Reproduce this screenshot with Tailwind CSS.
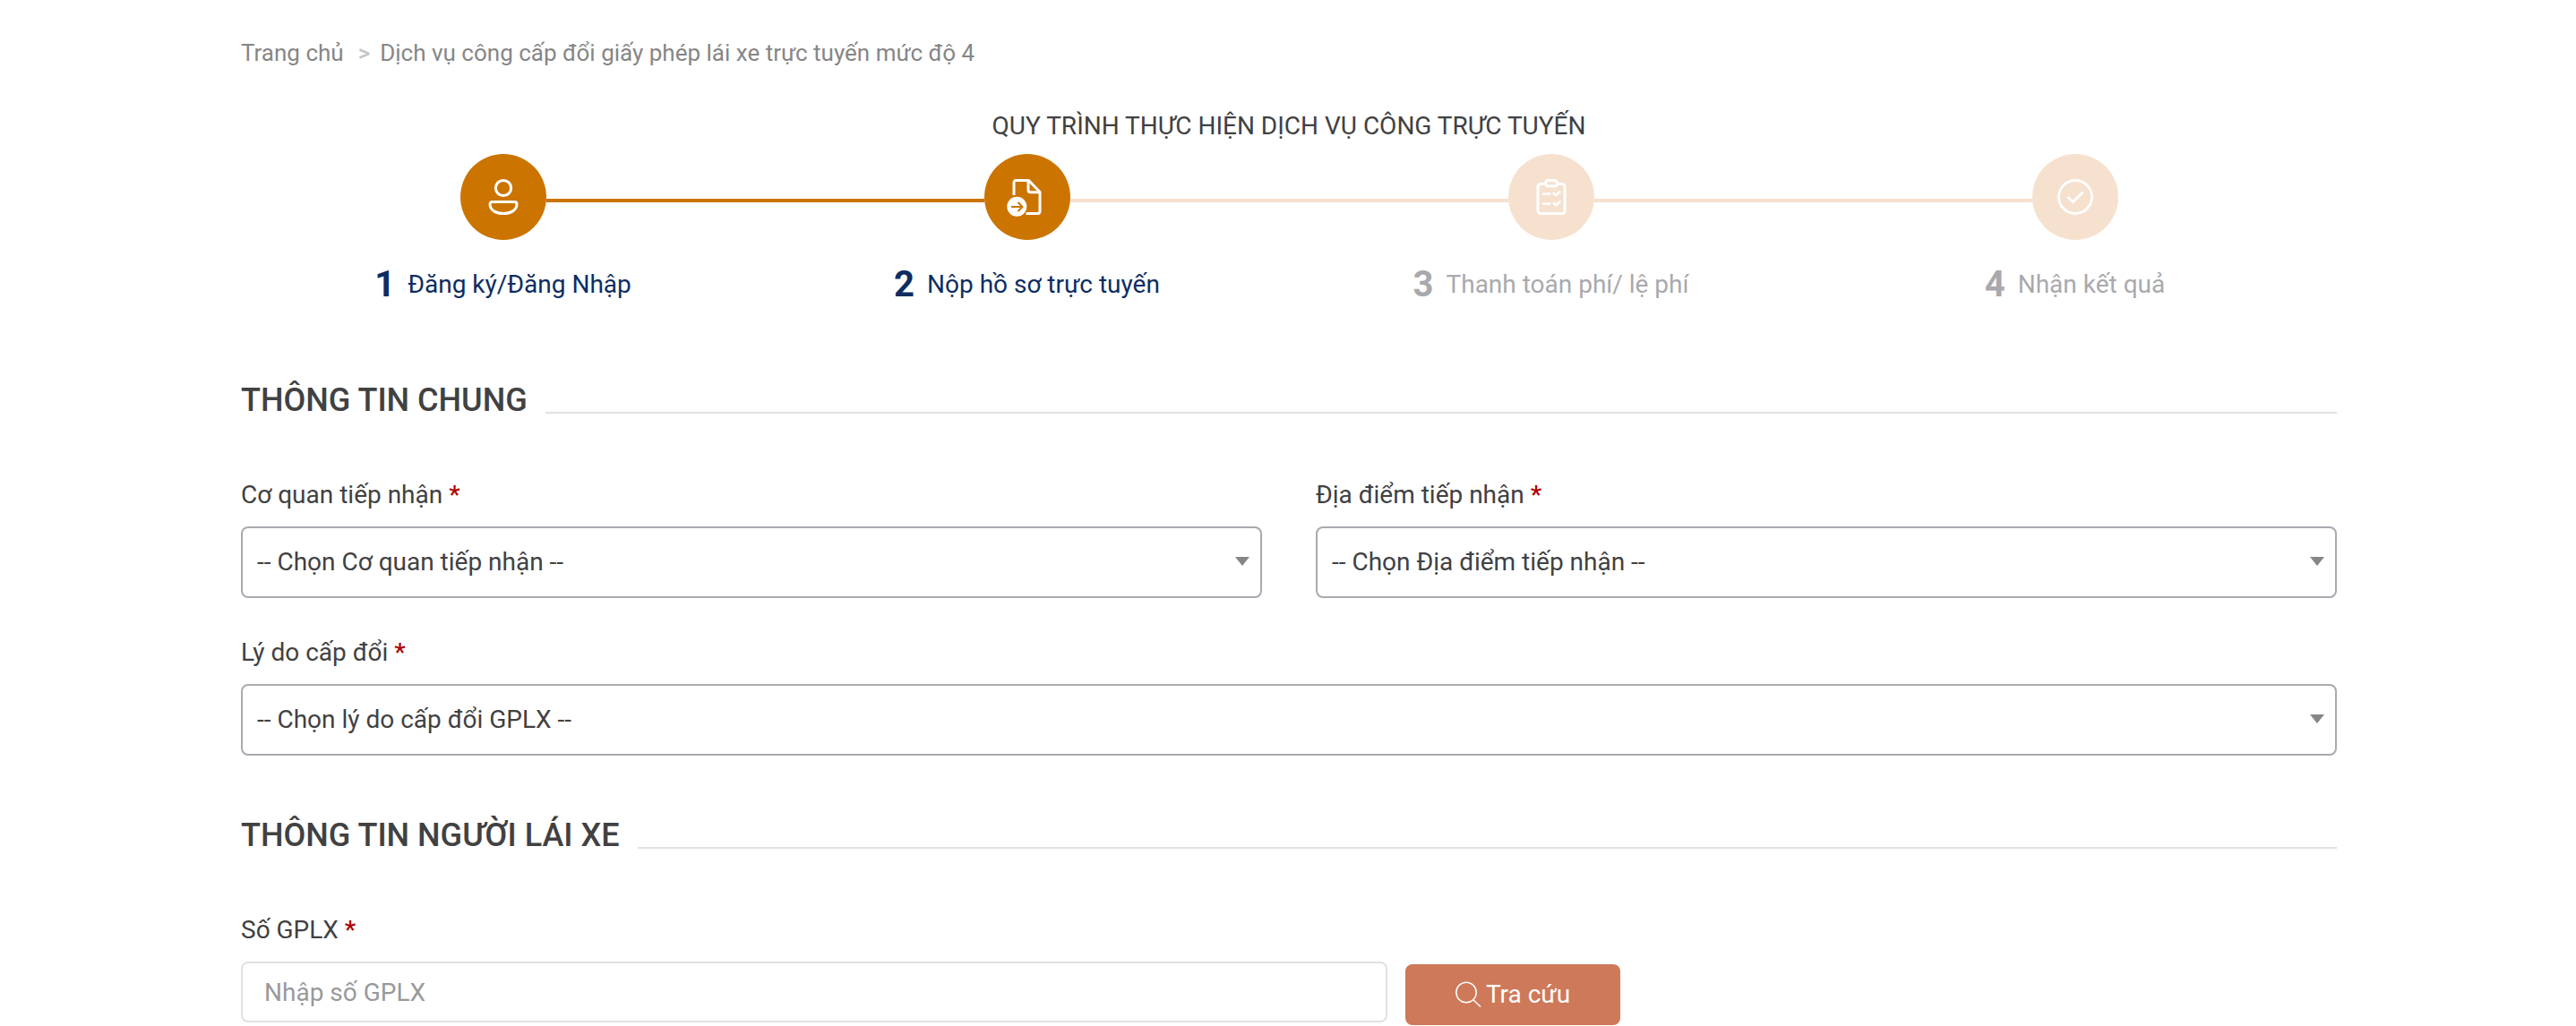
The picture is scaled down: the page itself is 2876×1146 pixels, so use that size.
<!DOCTYPE html>
<html lang="vi">
<head>
  <meta charset="UTF-8" />
  <title>Dịch vụ công cấp đổi giấy phép lái xe</title>
  <script src="https://cdn.jsdelivr.net/npm/@tailwindcss/browser@4"></script>
</head>
<body class="bg-white h-[1146px] overflow-hidden font-['Roboto',sans-serif] text-[28px] leading-10 text-[#414142]">
  <main class="w-[2340px] ml-[269px] pt-[39px]">

    <nav class="flex text-[26px] text-[#868686]">
      <a href="#">Trang chủ</a>
      <span class="ml-4 mr-[11px] font-medium text-[#c4c4c6]">&gt;</span>
      <a href="#">Dịch vụ công cấp đổi giấy phép lái xe trực tuyến mức độ 4</a>
    </nav>

    <!-- Các bước thực hiện -->
    <h2 class="mt-[42px] text-center">QUY TRÌNH THỰC HIỆN DỊCH VỤ CÔNG TRỰC TUYẾN</h2>
    <ol class="mt-[11px] grid grid-cols-4">
      <li class="text-[#0d2d62]">
        <div class="flex items-center">
          <span class="flex-1"></span>
          <span class="size-24 rounded-full bg-[#cb7400] flex items-center justify-center">
            <svg class="size-12" viewBox="-4 -4 48 48" fill="none" stroke="#fff" stroke-width="3">
              <circle cx="20" cy="10" r="8.6" />
              <path d="M7.5 25.5h25a2.5 2.5 0 0 1 2.5 2.5c0 7-7 10.5-15 10.5S5 35 5 28a2.5 2.5 0 0 1 2.5-2.5z" />
            </svg>
          </span>
          <span class="flex-1 h-1 mt-2 bg-[#cb7400]"></span>
        </div>
        <p class="mt-[25px] flex justify-center items-center gap-3.5"><b class="pt-px text-[40px] leading-12">1</b> <span class="pt-px">Đăng ký/Đăng Nhập</span></p>
      </li>
      <li class="text-[#0d2d62]">
        <div class="flex items-center">
          <span class="flex-1 h-1 mt-2 bg-[#cb7400]"></span>
          <span class="size-24 rounded-full bg-[#cb7400] flex items-center justify-center">
            <svg class="size-12" viewBox="-4 -4 48 48" fill="none" stroke="#fff" stroke-width="3" stroke-linejoin="round">
              <path d="M5 18V4a2.5 2.5 0 0 1 2.5-2.5h14L34 14.5V36a2.5 2.5 0 0 1-2.5 2.5H18.500" />
              <path d="M21 2v10.300a2.500 2.500 0 0 0 2.500 2.500h10.500" />
              <circle cx="8.300" cy="30.800" r="11" fill="#fff" stroke="none" />
              <path d="M2 31h12.500M9.500 26l5 5-5 5" stroke="#cb7400" stroke-width="2" />
            </svg>
          </span>
          <span class="flex-1 h-1 mt-2 bg-[#f6e1cf]"></span>
        </div>
        <p class="mt-[25px] flex justify-center items-center gap-3.5"><b class="pt-px text-[40px] leading-12">2</b> <span class="pt-px">Nộp hồ sơ trực tuyến</span></p>
      </li>
      <li class="text-[#a9a9ad]">
        <div class="flex items-center">
          <span class="flex-1 h-1 mt-2 bg-[#f6e1cf]"></span>
          <span class="size-24 rounded-full bg-[#f6e1cf] flex items-center justify-center">
            <svg class="size-12" viewBox="-4 -4 48 48" fill="none" stroke="#fff" stroke-width="3" stroke-linecap="round" stroke-linejoin="round">
              <path d="M13.5 5.5H8A3 3 0 0 0 5 8.5V35.5a3 3 0 0 0 3 3H32a3 3 0 0 0 3-3V8.5a3 3 0 0 0-3-3H26.5" />
              <rect x="13.5" y="1.5" width="13" height="6.5" rx="3" />
              <path stroke-width="2.800" d="M11.500 16.500h6.500M22.800 16l2.500 2 4-3.500M11.500 27.500h6.500M22.800 27l2.500 2 4-3.500" />
            </svg>
          </span>
          <span class="flex-1 h-1 mt-2 bg-[#f6e1cf]"></span>
        </div>
        <p class="mt-[25px] flex justify-center items-center gap-3.5"><b class="pt-px text-[40px] leading-12">3</b> <span class="pt-px">Thanh toán phí/ lệ phí</span></p>
      </li>
      <li class="text-[#a9a9ad]">
        <div class="flex items-center">
          <span class="flex-1 h-1 mt-2 bg-[#f6e1cf]"></span>
          <span class="size-24 rounded-full bg-[#f6e1cf] flex items-center justify-center">
            <svg class="size-12" viewBox="-4 -4 48 48" fill="none" stroke="#fff" stroke-width="2.8">
              <circle cx="20" cy="20" r="18.5" />
              <path d="M11.5 20l6 5.5L28.5 14.5" />
            </svg>
          </span>
          <span class="flex-1"></span>
        </div>
        <p class="mt-[25px] flex justify-center items-center gap-3.5"><b class="pt-px text-[40px] leading-12">4</b> <span class="pt-px">Nhận kết quả</span></p>
      </li>
    </ol>

    <!-- Thông tin chung -->
    <div class="mt-[83px] flex items-end gap-5">
      <h3 class="text-[36px] leading-11 font-medium">THÔNG TIN CHUNG</h3>
      <span class="flex-1 h-0.5 mb-[7px] bg-[#e1e1e2]"></span>
    </div>
    <div class="mt-16 grid grid-cols-2 gap-x-15 gap-y-[41px]">
      <div>
        <label class="block">Cơ quan tiếp nhận <span class="text-[#b00000] font-medium">*</span></label>
        <div class="mt-[15px] h-20 pl-4 pr-3 flex items-center justify-between border-2 border-[#a9a9b0] rounded-lg">
          <span>-- Chọn Cơ quan tiếp nhận --</span>
          <svg class="w-4 h-2.5 mb-0.5" viewBox="0 0 16 10" fill="#868686"><path d="M0 0h16L8 10z" /></svg>
        </div>
      </div>
      <div>
        <label class="block">Địa điểm tiếp nhận <span class="text-[#b00000] font-medium">*</span></label>
        <div class="mt-[15px] h-20 pl-4 pr-3 flex items-center justify-between border-2 border-[#a9a9b0] rounded-lg">
          <span>-- Chọn Địa điểm tiếp nhận --</span>
          <svg class="w-4 h-2.5 mb-0.5" viewBox="0 0 16 10" fill="#868686"><path d="M0 0h16L8 10z" /></svg>
        </div>
      </div>
      <div class="col-span-2">
        <label class="block">Lý do cấp đổi <span class="text-[#b00000] font-medium">*</span></label>
        <div class="mt-[15px] h-20 pl-4 pr-3 flex items-center justify-between border-2 border-[#a9a9b0] rounded-lg">
          <span>-- Chọn lý do cấp đổi GPLX --</span>
          <svg class="w-4 h-2.5 mb-0.5" viewBox="0 0 16 10" fill="#868686"><path d="M0 0h16L8 10z" /></svg>
        </div>
      </div>
    </div>

    <!-- Thông tin người lái xe -->
    <div class="mt-[67px] flex items-end gap-5">
      <h3 class="text-[36px] leading-11 font-medium">THÔNG TIN NGƯỜI LÁI XE</h3>
      <span class="flex-1 h-0.5 mb-[7px] bg-[#e1e1e2]"></span>
    </div>
    <label class="block mt-16" for="so-gplx">Số GPLX <span class="text-[#b00000] font-medium">*</span></label>
    <div class="mt-[15px] flex items-start gap-5">
      <input id="so-gplx" type="text" placeholder="Nhập số GPLX" class="w-[1280px] h-[68px] px-6 border-2 border-[#e1e1e2] rounded-lg placeholder:text-[#98999b]" />
      <button class="mt-[3px] w-60 h-[68px] pr-px flex items-center justify-center gap-[5px] bg-[#ce7959] text-white rounded-lg">
        <svg class="size-[30px]" viewBox="0 0 30 30" fill="none" stroke="#fff" stroke-width="1.5">
          <circle cx="13" cy="12.5" r="11.2" />
          <path d="M20.5 20.5L29 28.5" />
        </svg>
        Tra cứu
      </button>
    </div>
  </main>
</body>
</html>
